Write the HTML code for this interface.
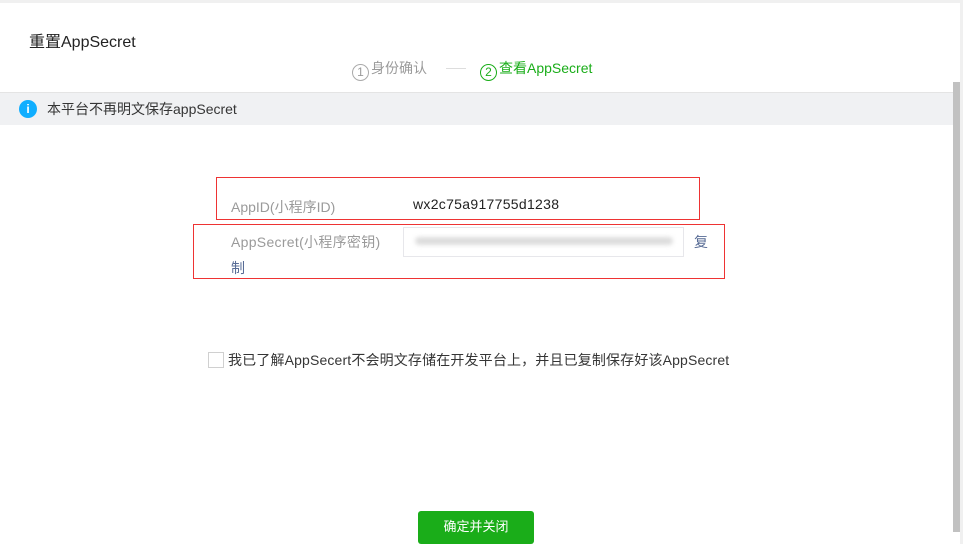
<!DOCTYPE html>
<html><head><meta charset="utf-8"><style>
*{margin:0;padding:0;box-sizing:border-box}
body{width:963px;height:544px;overflow:hidden;background:#fff;font-family:"Liberation Sans","Noto Sans CJK SC",sans-serif;position:relative;color:#353535}
.a{position:absolute;white-space:nowrap}
</style></head><body>
<div class="a" style="left:0;top:0;width:963px;height:3px;background:#f0f0f0"></div>
<div class="a" style="left:29px;top:28px;font-size:16px;color:#222">重置AppSecret</div>
<div class="a" style="left:352px;top:58px;font-size:14px;color:#9a9a9a"><span style="display:inline-block;width:17px;height:17px;border:1px solid #aaa;border-radius:50%;font-size:12px;text-align:center;line-height:15px;vertical-align:-3px;margin-right:2px">1</span>身份确认</div>
<div class="a" style="left:446px;top:68px;width:20px;height:1px;background:#ddd"></div>
<div class="a" style="left:480px;top:58px;font-size:14px;color:#1aad19"><span style="display:inline-block;width:17px;height:17px;border:1px solid #1aad19;border-radius:50%;font-size:12px;text-align:center;line-height:15px;vertical-align:-3px;margin-right:2px">2</span>查看AppSecret</div>
<div class="a" style="left:0;top:92px;width:953px;height:33px;background:#f0f1f3;border-top:1px solid #e4e4e4"></div>
<div class="a" style="left:19px;top:100px;width:18px;height:18px;border-radius:50%;background:#10aeff;color:#fff;font-size:12px;text-align:center;line-height:18px;font-weight:bold">i</div>
<div class="a" style="left:47px;top:99px;font-size:14px;color:#353535">本平台不再明文保存appSecret</div>
<div class="a" style="left:216px;top:177px;width:484px;height:43px;border:1px solid #e33"></div>
<div class="a" style="left:231px;top:197px;font-size:14px;color:#9a9a9a">AppID(小程序ID)</div>
<div class="a" style="left:413px;top:196px;font-size:14px;color:#222;letter-spacing:0.3px">wx2c75a917755d1238</div>
<div class="a" style="left:193px;top:224px;width:532px;height:55px;border:1px solid #e33"></div>
<div class="a" style="left:231px;top:232px;font-size:14px;color:#9a9a9a;letter-spacing:0.3px">AppSecret(小程序密钥)</div>
<div class="a" style="left:403px;top:227px;width:281px;height:30px;border:1px solid #e7e7eb"></div>
<div class="a" style="left:415px;top:237px;width:258px;height:8px;background:#ddd;border-radius:4px;filter:blur(2px)"></div>
<div class="a" style="left:694px;top:232px;font-size:14px;color:#576b95">复</div>
<div class="a" style="left:231px;top:258px;font-size:14px;color:#576b95">制</div>
<div class="a" style="left:208px;top:352px;width:16px;height:16px;border:1px solid #d0d0d0;background:#fff"></div>
<div class="a" style="left:228px;top:350px;font-size:14px;color:#353535;letter-spacing:0.15px">我已了解AppSecert不会明文存储在开发平台上，并且已复制保存好该AppSecret</div>
<div class="a" style="left:418px;top:511px;width:116px;height:33px;background:#1aad19;border-radius:3px;color:#fff;font-size:13px;text-align:center;line-height:32px">确定并关闭</div>
<div class="a" style="left:953px;top:82px;width:7px;height:450px;background:#c1c1c1"></div>
<div class="a" style="left:960px;top:0;width:3px;height:544px;background:#f0f0f0"></div>
</body></html>
